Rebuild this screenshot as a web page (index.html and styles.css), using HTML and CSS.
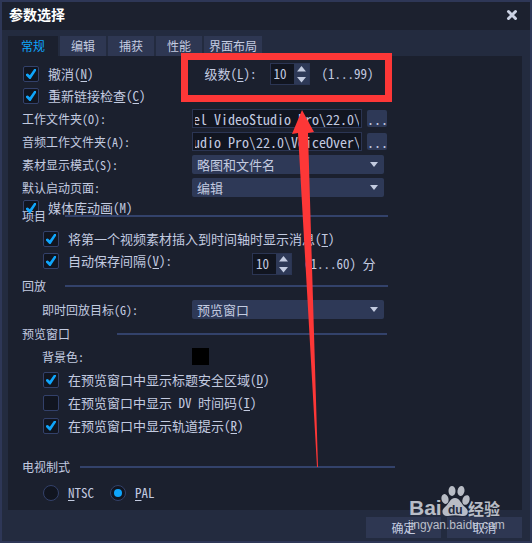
FILE: index.html
```html
<!DOCTYPE html>
<html lang="zh-CN">
<head>
<meta charset="utf-8">
<title>参数选择</title>
<link rel="stylesheet" href="styles.css">
</head>
<body>
<main class="dialog">
  <header class="titlebar">
    <h1>参数选择</h1>
    <button class="close" aria-label="关闭"><svg width="12" height="12" viewBox="0 0 12 12"><path d="M2.5 2.5 9.5 9.5M9.5 2.5 2.5 9.5" stroke="currentColor" stroke-width="3" stroke-linecap="round"/></svg></button>
  </header>
  <nav class="tabs">
    <button class="tab active">常规</button>
    <button class="tab">编辑</button>
    <button class="tab">捕获</button>
    <button class="tab">性能</button>
    <button class="tab wide">界面布局</button>
  </nav>
  <form class="panel">
    <div class="row">
      <label class="check"><input type="checkbox" checked>撤消(<u>N</u>)</label>
      <div class="levels">
        <label for="levels">级数(<u>L</u>):</label>
        <span class="spinner"><input id="levels" type="text" value="10"><svg width="15" height="18" viewBox="0 0 15 18"><path d="M7.5 1 12 6.500H3zM3 12h9l-4.500 5.500z" fill="currentColor"/></svg></span>
        <span>(1...99)</span>
      </div>
    </div>
    <div class="row"><label class="check"><input type="checkbox" checked>重新链接检查(<u>C</u>)</label></div>
    <div class="row field"><label for="work">工作文件夹(O):</label><input class="path" id="work" type="text" value="el VideoStudio Pro\22.0\"><button type="button" class="browse">...</button></div>
    <div class="row field"><label for="audio">音频工作文件夹(A):</label><input class="path" id="audio" type="text" value="udio Pro\22.0\VoiceOver\"><button type="button" class="browse">...</button></div>
    <div class="row field"><label for="mode">素材显示模式(S):</label><span class="drop"><select id="mode"><option>略图和文件名</option></select></span></div>
    <div class="row field"><label for="start">默认启动页面:</label><span class="drop"><select id="start"><option>编辑</option></select></span></div>
    <div class="row media"><label class="check"><input type="checkbox" checked>媒体库动画(<u>M</u>)</label></div>

    <section class="group project">
      <h2>项目</h2>
      <div class="row inset"><label class="check"><input type="checkbox" checked>将第一个视频素材插入到时间轴时显示消息(<u>T</u>)</label></div>
      <div class="row inset">
        <label class="check"><input type="checkbox" checked>自动保存间隔(<u>V</u>):</label>
        <div class="interval">
          <span class="spinner"><input aria-label="自动保存间隔" type="text" value="10"><svg width="15" height="18" viewBox="0 0 15 18"><path d="M7.500 1 12 6.500H3zM3 12h9l-4.500 5.500z" fill="currentColor"/></svg></span>
          <span>(1...60) 分</span>
        </div>
      </div>
    </section>

    <section class="group playback">
      <h2>回放</h2>
      <div class="row field inset"><label for="target">即时回放目标(G):</label><span class="drop"><select id="target"><option>预览窗口</option></select></span></div>
    </section>

    <section class="group preview">
      <h2>预览窗口</h2>
      <div class="row field inset"><label for="bg">背景色:</label><button type="button" class="swatch" id="bg"></button></div>
      <div class="row inset"><label class="check"><input type="checkbox" checked>在预览窗口中显示标题安全区域(<u>D</u>)</label></div>
      <div class="row inset"><label class="check"><input type="checkbox">在预览窗口中显示 DV 时间码(<u>I</u>)</label></div>
      <div class="row inset"><label class="check"><input type="checkbox" checked>在预览窗口中显示轨道提示(<u>R</u>)</label></div>
    </section>

    <section class="group tv">
      <h2>电视制式</h2>
      <div class="row inset radios">
        <label class="check"><input type="radio" name="tv"><span><u>N</u>TSC</span></label>
        <label class="check"><input type="radio" name="tv" checked><span><u>P</u>AL</span></label>
      </div>
    </section>
  </form>
  <footer class="actions"><button>确定</button><button>取消</button></footer>

  <div class="highlight"></div>
  <svg class="arrow" width="30" height="360" viewBox="0 0 30 360"><path d="M13 2 25 24 19 25 29 359 28 359 9 25 3 26z" fill="#fd3737"/></svg>
  <svg class="watermark" width="100" height="56" viewBox="0 0 100 56">
    <g fill="#c9cdd6">
      <ellipse cx="39" cy="15" rx="3.500" ry="5" transform="rotate(-15 39 15)"/><ellipse cx="46" cy="7" rx="3.500" ry="5"/><ellipse cx="55" cy="7" rx="3.500" ry="5" transform="rotate(10 55 7)"/><ellipse cx="60" cy="16" rx="3.500" ry="5" transform="rotate(20 60 16)"/>
      <path d="M49 14c-5 0-6 6-10 9-5 4-2 10 3 9 5-1 9-1 14 0 6 1 8-5 3-9-4-3-5-9-10-9z"/>
      <text class="brand" x="3" y="31">Bai</text>
      <text class="brand-cn" x="62" y="31">经验</text>
      <text class="site" x="2" y="45">jingyan.baidu.com</text>
    </g>
    <text class="du" x="42" y="30">du</text>
  </svg>
</main>
</body>
</html>
```
FILE: styles.css
```css
* { box-sizing: border-box; }
body {
  margin: 0;
  background: #232b3f;
  color: #c3cbe0;
  font: 13px/22px "Noto Sans CJK SC", sans-serif;
  font-feature-settings: "hwid";
}
button, input, select { font: inherit; font-feature-settings: inherit; color: inherit; border: 0; margin: 0; padding: 0; }
u { text-underline-offset: 2px; }

.dialog {
  position: relative;
  min-height: 100vh;
  border: 2px solid #2e3757;
  background: #232b3f;
}
.titlebar {
  display: flex;
  justify-content: space-between;
  height: 28px;
  padding: 0 12px 0 7px;
  background: #1c212f;
}
h1 { margin: 0; font-size: 14px; line-height: 24px; color: #fff; }
.close { background: none; height: 25px; width: 12px; color: #cbd2e3; }
.close svg { display: block; margin: auto; fill: none; }

.tabs { display: flex; gap: 2px; padding: 6px 6px 0; }
.tab { width: 46px; height: 20px; font-size: 12px; line-height: 20px; background: #2e3752; }
.tab.active { width: 50px; background: #1b202e; color: #0fa5fb; }
.tab.wide { width: 58px; }

.panel { margin: 0 8px 0 6px; padding: 7px 0 6px 14px; background: #1b202e; }
.row { display: flex; align-items: center; height: 22px; white-space: nowrap; }
.field { height: 23px; font-size: 12px; }
.field > label { width: 170px; }
.inset { padding-left: 20px; }
.inset.field > label { width: 150px; }
.media { margin-top: -2px; }
.check { display: flex; align-items: center; white-space: pre; }

.check input {
  appearance: none;
  display: grid;
  place-items: center;
  width: 16px;
  height: 16px;
  margin: 0 9px 0 1px;
  border: 1px solid #33416a;
  border-radius: 2px;
  background: #111520;
}
.check input[type="checkbox"]:checked::before {
  content: "";
  width: 10px;
  height: 10px;
  background: #0fa5fb;
  clip-path: polygon(0 50%, 18% 45%, 38% 62%, 82% 0, 100% 0, 100% 18%, 46% 100%, 34% 100%, 0 66%);
}
.check input[type="radio"] { border-radius: 50%; }
.check input[type="radio"]:checked::before {
  content: "";
  width: 8px;
  height: 8px;
  border-radius: 50%;
  background: #0fa5fb;
}

.levels, .interval { display: flex; align-items: center; }
.levels { margin-left: 111px; }
.levels label { width: 65px; }
.interval { margin: 6px 0 0 80px; }
.spinner {
  display: flex;
  width: 40px;
  height: 22px;
  margin-right: 12px;
  border: 1px solid #2b3553;
  background: #111520;
}
.spinner input { width: 23px; padding-left: 3px; background: none; }
.spinner svg { height: 20px; background: #2e3957; }

.path {
  width: 170px;
  height: 19px;
  padding: 0 2px;
  border: 1px solid #2b3553;
  background: #111520;
  font-size: 14px;
  line-height: 16px;
  text-indent: -2px;
}
.browse { width: 20px; height: 17px; margin-left: 5px; border-radius: 2px; background: #2e3957; font-size: 14px; line-height: 12px; }
.drop { position: relative; width: 192px; height: 19px; }
.drop select {
  appearance: none;
  display: block;
  width: 100%;
  height: 19px;
  padding-left: 5px;
  border-radius: 2px;
  background: #2e3957;
  font-size: 13px;
  line-height: 19px;
}
.drop::after {
  content: "";
  position: absolute;
  right: 6px;
  top: 7px;
  border: 4px solid transparent;
  border-top: 5px solid #c3cbe0;
  border-bottom: 0;
}
.swatch { width: 17px; height: 17px; background: #000; }

h2 { display: flex; align-items: center; height: 22px; margin: 0; font-size: 12px; font-weight: 400; }
h2::after { content: ""; height: 2px; background: #33426b; }
.project { margin-top: -14px; }
.project h2, .playback h2 { margin-bottom: 1px; }
.project h2::after, .playback h2::after { width: 323px; margin-left: 19px; }
.playback { margin-top: 3px; }
.preview { margin-top: 2px; }
.preview h2::after { width: 270px; margin-left: 47px; }
.preview .row { height: 23px; }
.tv { margin-top: 19px; }
.tv h2 { margin-bottom: 4px; }
.tv h2::after { width: 315px; margin-left: 10px; }
.radios { gap: 15px; }

.actions { display: flex; justify-content: flex-end; gap: 6px; padding: 7px 8px 2px 0; }
.actions button { width: 75px; height: 21px; background: #2e3752; font-size: 12px; line-height: 21px; }

.highlight { position: absolute; left: 179px; top: 51px; width: 211px; height: 49px; border: 7px solid #fd3737; }
.arrow { position: absolute; left: 287px; top: 106px; }
.watermark { position: absolute; left: 404px; top: 482px; opacity: 0.9; font-feature-settings: normal; }
.brand { font: bold 21px "Liberation Sans", sans-serif; }
.brand-cn { font: bold 16px "Noto Sans CJK SC", sans-serif; }
.site { font: 12px "Liberation Sans", sans-serif; }
.du { font: bold 12px "Liberation Sans", sans-serif; fill: #232b3f; }
```
